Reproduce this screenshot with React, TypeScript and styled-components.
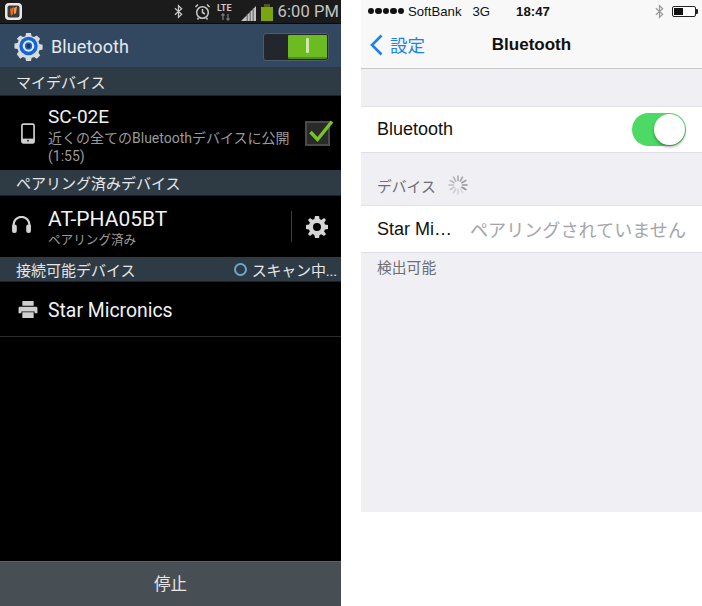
import React from "react";
import styled, { createGlobalStyle } from "styled-components";

const Global = createGlobalStyle`
  html, body { margin: 0; padding: 0; background: #fff; }
  body { font-family: Roboto, "Noto Sans CJK JP", sans-serif; }
`;

const CJK = `Roboto, "Noto Sans CJK JP", sans-serif`;
const IOS = `"Liberation Sans", "Noto Sans CJK JP", sans-serif`;

const Page = styled.div`
  width: 702px; height: 606px; display: flex; gap: 20px; overflow: hidden; background: #fff;
`;

/* ---------- Android ---------- */
const Android = styled.div`
  width: 341px; height: 606px; background: #000; display: flex; flex-direction: column;
  font-family: ${CJK}; color: #f0f0f0;
`;
const AStatus = styled.div`
  height: 23px; background: #1b1b1b; display: flex; align-items: center; padding: 0 2px 0 5px;
  border-bottom: 1px solid #0a0a0a; flex: none;
`;
const AppBadge = styled.div`
  width: 17px; height: 17px; border-radius: 4px; background: #e8e8e6; display: flex; align-items: center; justify-content: center; flex: none;
`;
const AStatusRight = styled.div`
  margin-left: auto; display: flex; align-items: center;
`;
const Clock = styled.span`
  font-size: 16.5px; color: #c4c4c4; margin-left: 5px; line-height: 23px; letter-spacing: 0.1px;
`;
const AHeader = styled.div`
  height: 44px; flex: none; background: #314860; display: flex; align-items: center; padding: 2px 6px 0 14px; box-sizing: border-box;
  border-bottom: 1px solid #27394b;
`;
const HeaderTitle = styled.span`
  font-size: 18px; color: #e6e9ec; margin-left: 8px; letter-spacing: 0.1px;
`;
const Toggle = styled.div`
  margin-left: auto; width: 66px; height: 28px; box-sizing: border-box; border: 1px solid #4f5d6b; border-radius: 3px; background: #23262c;
  display: flex; justify-content: flex-end; margin-right: 6px; padding: 1px;
`;
const ToggleOn = styled.div`
  width: 39px; background: #6cbb21; border-bottom: 2px solid #4f8f16; border-radius: 1px; display: flex; align-items: center; justify-content: center;
`;
const ToggleMark = styled.div`
  width: 3px; height: 15px; background: #cfe9a8; border-radius: 1px;
`;
const Section = styled.div<{ $h: number }>`
  height: ${(p) => p.$h}px; flex: none; box-sizing: border-box; background: #2f3b44; display: flex; align-items: center; padding: 0 4px 0 16px;
  font-size: 15px; color: #e4e6e8; border-bottom: 1px solid #1a2126;
`;
const Scan = styled.div`
  margin-left: auto; display: flex; align-items: center; gap: 5px; font-size: 15px; letter-spacing: -0.2px;
`;
const Ring = styled.div`
  width: 13px; height: 13px; box-sizing: border-box; border: 2px solid #6aa8cf; border-radius: 50%;
`;
const Row = styled.div<{ $h: number }>`
  height: ${(p) => p.$h}px; flex: none; box-sizing: border-box; display: flex; align-items: center; position: relative;
`;
const IconSlot = styled.div`
  width: 48px; flex: none; display: flex; justify-content: center; align-items: center; padding-left: 8px; box-sizing: border-box;
`;
const RowText = styled.div`
  flex: 1; min-width: 0; display: flex; flex-direction: column; padding-top: 3px;
`;
const RowTitle = styled.div<{ $size: number }>`
  font-size: ${(p) => p.$size}px; line-height: 24px; color: #f2f2f2;
`;
const RowSub = styled.div<{ $size: number }>`
  font-size: ${(p) => p.$size}px; line-height: 18px; color: #9a9a9a; white-space: nowrap;
`;
const CheckBox = styled.div`
  width: 25px; height: 25px; box-sizing: border-box; border: 2px solid #4a4a4a; background: #2a2a2a; margin-right: 11px; flex: none; position: relative;
`;
const CheckGlyph = styled.svg`
  position: absolute; left: 1px; top: -5px;
`;
const VDivider = styled.div`
  width: 1px; height: 31px; background: #3c3c3c; flex: none;
`;
const GearSlot = styled.div`
  width: 49px; display: flex; justify-content: center; flex: none;
`;
const Rule = styled.div`
  height: 1px; background: #2b2b2b; flex: none;
`;
const Spacer = styled.div`
  flex: 1;
`;
const StopBar = styled.div`
  height: 45px; flex: none; box-sizing: border-box; background: #484f54; border-top: 1px solid #5b6368; padding-bottom: 3px;
  display: flex; align-items: center; justify-content: center; font-size: 16.5px; color: #e6e6e6;
`;

/* ---------- iOS ---------- */
const Ios = styled.div`
  width: 341px; height: 512px; background: #efeff4; display: flex; flex-direction: column; font-family: ${IOS}; color: #111;
`;
const IStatus = styled.div`
  height: 22px; flex: none; background: #f8f8f8; display: flex; align-items: center; font-size: 13.2px; padding: 0 6px 0 7px; position: relative;
`;
const Dots = styled.div`
  display: flex; gap: 1px; margin-right: 4px;
`;
const Dot = styled.div`
  width: 6.4px; height: 6.4px; border-radius: 50%; background: #111;
`;
const Net = styled.span`
  margin-left: 11px;
`;
const Time = styled.span`
  margin-left: 26px; font-weight: 700;
`;
const IStatusRight = styled.div`
  margin-left: auto; display: flex; align-items: center; gap: 8px;
`;
const Battery = styled.div`
  width: 24px; height: 11px; box-sizing: border-box; border: 1px solid #222; border-radius: 2px; padding: 1px; position: relative; background: #fff;
  &::after { content: ""; position: absolute; right: -3px; top: 2px; width: 2px; height: 5px; background: #222; border-radius: 0 1px 1px 0; }
`;
const BatteryFill = styled.div`
  width: 9px; height: 100%; background: #111;
`;
const INav = styled.div`
  height: 47px; flex: none; box-sizing: border-box; background: #f8f8f8; border-bottom: 1px solid #c8c8cb; padding-bottom: 1px;
  display: flex; align-items: center; position: relative; padding-left: 9px;
`;
const Back = styled.span`
  color: #1b80f3; font-size: 17.5px; margin-left: 7px;
`;
const NavTitle = styled.div`
  position: absolute; left: 0; right: 0; top: 0; bottom: 0; display: flex; align-items: center; justify-content: center; font-size: 17px; font-weight: 700;
`;
const ICell = styled.div<{ $h: number; $mt: number }>`
  height: ${(p) => p.$h}px; margin-top: ${(p) => p.$mt}px; flex: none; box-sizing: border-box; background: #fff;
  border-top: 1px solid #e2e2e6; border-bottom: 1px solid #dfdfe3; display: flex; align-items: center; padding: 0 16px;
  font-size: 18px;
`;
const Switch = styled.div`
  margin-left: auto; width: 54px; height: 33px; border-radius: 17px; background: #4cd964; position: relative; box-sizing: border-box;
`;
const Knob = styled.div`
  position: absolute; right: 1px; top: 1px; width: 31px; height: 31px; border-radius: 50%; background: #fff; box-shadow: 0 2px 3px rgba(0,0,0,.35);
`;
const IGroup = styled.div<{ $h: number; $gap: number; $pb: number }>`
  height: ${(p) => p.$h}px; flex: none; display: flex; align-items: flex-end; gap: ${(p) => p.$gap}px; padding: 0 16px ${(p) => p.$pb}px; box-sizing: border-box;
  font-size: 14.8px; color: #6d6d72;
`;
const Muted = styled.span`
  margin-left: auto; color: #a5a5aa; font-size: 18.1px;
`;

const Gear = ({ size, color }: { size: number; color: string }) => (
  <svg width={size} height={size} viewBox="0 0 24 24" fill={color}>
    <path d="M10 1h4l.6 3.1 1.8.8L19 3.1 21 5l-1.8 2.6.8 1.8L23 10v4l-3.1.6-.8 1.8L21 19l-2 2-2.6-1.8-1.8.8L14 23h-4l-.6-3.1-1.8-.8L5 21l-2-2 1.8-2.6-.8-1.8L1 14v-4l3.1-.6.8-1.8L3 5l2-2 2.6 1.8 1.8-.8z M12 8a4 4 0 1 0 0 8 4 4 0 0 0 0-8z" fillRule="evenodd" />
  </svg>
);

const BtGlyph = ({ color, w = 9, h = 15 }: { color: string; w?: number; h?: number }) => (
  <svg width={w} height={h} viewBox="0 0 10 16" fill="none" stroke={color} strokeWidth="1.4">
    <path d="M1 4.5 8.5 11 5 14.5V1.5L8.5 5 1 11.5" />
  </svg>
);

const SpinnerIcon = () => (
  <svg width="22" height="22" viewBox="0 0 22 22">
    {Array.from({ length: 12 }).map((_, i) => (
      <line key={i} x1="11" y1="2" x2="11" y2="6.5" stroke="#8e8e93" strokeWidth="1.6" strokeLinecap="round"
        opacity={0.2 + ((i + 7) % 12) / 14} transform={`rotate(${i * 30} 11 11)`} />
    ))}
  </svg>
);

export default function App() {
  return (
    <Page>
      <Global />
      <Android>
        <AStatus>
          <AppBadge>
            <svg width="13" height="13" viewBox="0 0 13 13">
              <rect x="0.5" y="0.5" width="12" height="12" rx="2" fill="#3a3a38" />
              <path d="M3 4 7 2 6 9 4 11z" fill="#ea6a1c" />
              <path d="M7 3 10 1.5 9 8 7 9.5z" fill="#f09a50" />
            </svg>
          </AppBadge>
          <AStatusRight>
            <BtGlyph color="#c8c8c8" />
            <svg width="17" height="17" viewBox="0 0 17 17" fill="none" stroke="#c8c8c8" strokeWidth="1.5" style={{ marginLeft: 11 }}>
              <circle cx="8.5" cy="9.5" r="5.8" />
              <path d="M8.5 6v3.5l2.5 1.5M1.5 4 4 1.5M15.5 4 13 1.5M4.5 15l-1 1.5M12.5 15l1 1.5" />
            </svg>
            <svg width="18" height="18" viewBox="0 0 18 18" style={{ marginLeft: 6 }}>
              <text x="0" y="8" fontSize="9" fontWeight="700" fill="#c8c8c8" fontFamily="Roboto">LTE</text>
              <path d="M6 17v-6M4.5 12.5 6 11l1.5 1.500M11 11v6M9.500 15.500 11 17l1.500-1.500" stroke="#777" strokeWidth="1.3" fill="none" />
            </svg>
            <svg width="15" height="16" viewBox="0 0 15 16" fill="#c4c4c4" style={{ marginLeft: 6, marginTop: 2 }}>
              <path d="M0 16 15 1v15zM5.800 16h.6V9.500h-.6zM8.800 16h.6V6.500h-.6zM11.800 16h.6V3.500h-.6z" fillRule="evenodd" />
            </svg>
            <svg width="12" height="17" viewBox="0 0 12 17" style={{ marginLeft: 5, marginTop: 1 }}>
              <rect x="3" y="0" width="6" height="3" fill="#4d5a1c" />
              <rect x="0" y="3" width="12" height="14" fill="#7ca312" />
            </svg>
            <Clock>6:00 PM</Clock>
          </AStatusRight>
        </AStatus>
        <AHeader>
          <svg width="29" height="29" viewBox="0 0 30 30">
            <path fill="#d8dadc" d="M12.500 1h5l.7 3.300 2.500 1 2.900-1.800 3.500 3.500-1.800 2.900 1 2.500 3.300.7v5l-3.300.7-1 2.500 1.800 2.900-3.500 3.500-2.900-1.800-2.500 1-.7 3.300h-5l-.7-3.300-2.500-1-2.900 1.800L2.900 23l1.800-2.900-1-2.500L.5 17v-5l3.200-.7 1-2.500L2.900 7l3.500-3.500 2.900 1.800 2.500-1z" />
            <circle cx="15" cy="14.500" r="9.500" fill="#1564d8" />
            <circle cx="15" cy="14.500" r="6" fill="#e4eef8" />
            <circle cx="15" cy="14.500" r="3.800" fill="#1a62c8" />
            <circle cx="15" cy="14.500" r="2" fill="#23344a" />
          </svg>
          <HeaderTitle>Bluetooth</HeaderTitle>
          <Toggle>
            <ToggleOn><ToggleMark /></ToggleOn>
          </Toggle>
        </AHeader>
        <Section $h={28}>マイデバイス</Section>
        <Row $h={74}>
          <IconSlot>
            <svg width="14" height="21" viewBox="0 0 15 22" fill="none">
              <rect x="1" y="1" width="13" height="20" rx="1.500" stroke="#d0d0d0" strokeWidth="1.800" />
              <rect x="1" y="16.500" width="13" height="4.500" fill="#d0d0d0" />
              <circle cx="7.500" cy="18.700" r="1" fill="#222" />
            </svg>
          </IconSlot>
          <RowText>
            <RowTitle $size={19}>SC-02E</RowTitle>
            <RowSub $size={14}>近くの全てのBluetoothデバイスに公開</RowSub>
            <RowSub $size={14}>(1:55)</RowSub>
          </RowText>
          <CheckBox>
            <CheckGlyph width="26" height="26" viewBox="0 0 26 26">
              <path d="M2.500 14 9.500 21.500 24 3.500" fill="none" stroke="#76c425" strokeWidth="3.400" />
            </CheckGlyph>
          </CheckBox>
        </Row>
        <Section $h={26}>ペアリング済みデバイス</Section>
        <Row $h={61}>
          <IconSlot>
            <svg width="21" height="17" viewBox="0 0 22 18" fill="none" style={{ marginRight: 14, marginTop: -4 }}>
              <path d="M2.500 12V9.500a8.500 8.500 0 0 1 17 0V12" stroke="#d4d4d4" strokeWidth="2.400" />
              <rect x="1" y="9" width="5" height="9" rx="2.200" fill="#d4d4d4" />
              <rect x="16" y="9" width="5" height="9" rx="2.200" fill="#d4d4d4" />
            </svg>
          </IconSlot>
          <RowText>
            <RowTitle $size={21}>AT-PHA05BT</RowTitle>
            <RowSub $size={12.6}>ペアリング済み</RowSub>
          </RowText>
          <VDivider />
          <GearSlot><Gear size={24} color="#d6d6d6" /></GearSlot>
        </Row>
        <Section $h={25}>
          接続可能デバイス
          <Scan><Ring />スキャン中...</Scan>
        </Section>
        <Row $h={54}>
          <IconSlot>
            <svg width="20" height="17" viewBox="0 0 20 18" fill="#d0d0d0">
              <path d="M4 0h12v5H4zM1.500 6h17a1.500 1.500 0 0 1 1.500 1.500V13h-3v-2H3v2H0V7.500A1.500 1.500 0 0 1 1.500 6zM4 12h12v6H4z" />
            </svg>
          </IconSlot>
          <RowText><RowTitle $size={19.4}>Star Micronics</RowTitle></RowText>
        </Row>
        <Rule />
        <Spacer />
        <StopBar>停止</StopBar>
      </Android>
      <Ios>
        <IStatus>
          <Dots><Dot /><Dot /><Dot /><Dot /><Dot /></Dots>
          SoftBank
          <Net>3G</Net>
          <Time>18:47</Time>
          <IStatusRight>
            <BtGlyph color="#9a9a9a" w={9} h={15} />
            <Battery><BatteryFill /></Battery>
          </IStatusRight>
        </IStatus>
        <INav>
          <svg width="13" height="22" viewBox="0 0 13 22" fill="none" stroke="#1b80f3" strokeWidth="2.600">
            <path d="M11.500 1.500 2 11l9.500 9.500" />
          </svg>
          <Back>設定</Back>
          <NavTitle>Bluetooth</NavTitle>
        </INav>
        <ICell $h={47} $mt={37}>
          Bluetooth
          <Switch><Knob /></Switch>
        </ICell>
        <IGroup $h={52} $gap={11} $pb={9}>
          デバイス
          <SpinnerIcon />
        </IGroup>
        <ICell $h={48} $mt={0}>
          Star Mi…
          <Muted>ペアリングされていません</Muted>
        </ICell>
        <IGroup $h={24} $gap={0} $pb={0}>検出可能</IGroup>
      </Ios>
    </Page>
  );
}
